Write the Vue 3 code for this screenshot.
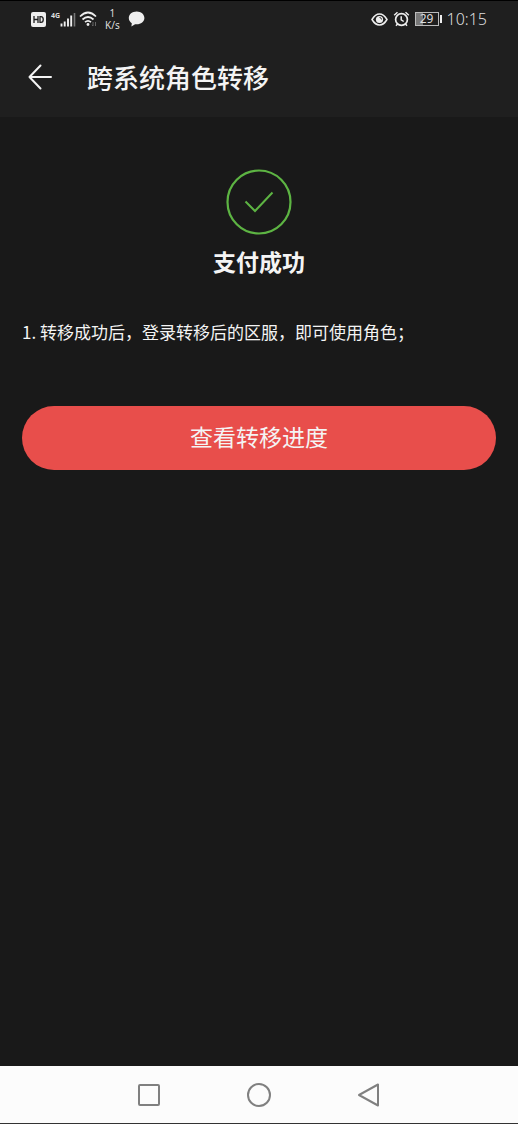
<script setup>
const title = '跨系统角色转移'
const notes = ['转移成功后，登录转移后的区服，即可使用角色；']
</script>

<template>
  <div class="screen">
    <div class="status">
      <div class="left">
        <svg class="hd" width="15" height="15" viewBox="0 0 15 15" aria-label="HD">
          <rect width="15" height="15" rx="2" fill="#eee" />
          <path d="M3 4v7M7 4v7M3 7.5h4M9 4.6v5.8h1c3 0 3-5.8 0-5.8z" fill="none" stroke="#1f1f1f" stroke-width="1.3" />
        </svg>
        <div class="cell">
          <span class="gen">4G</span>
          <svg width="16" height="15" viewBox="0 0 16 15" aria-hidden="true">
            <path d="M1.500 14.500v-3M4.700 14.500v-5M8 14.500v-8M11.200 14.500v-11" stroke="#eee" stroke-width="1.900" />
            <path d="M14.500 14.500V1" stroke="#777" stroke-width="1.600" />
          </svg>
        </div>
        <svg class="wifi" width="18" height="16" viewBox="0 0 18 16" fill="none" stroke="#eee" stroke-width="1.700" aria-hidden="true">
          <path d="M1 5.500Q9-2.500 17 5.500M3.500 8.500q5.500-5 11 0M6 11.200q3-2.600 6 0" />
          <circle cx="9" cy="13.500" r="1.400" fill="#eee" stroke="none" />
          <path d="M14 11v4m-1-1.200 1 1.200M16.500 15v-4" stroke="#666" stroke-width="1" />
        </svg>
        <div class="rate"><span>1</span><span>K/s</span></div>
        <svg class="bubble" width="17" height="16" viewBox="0 0 17 16" aria-hidden="true">
          <path d="M8.700.5C4.200.5.800 3.300.800 7c0 2.300 1.300 4.200 3 5.300L3.400 15.500l3.700-2.300c5 .8 9.300-2.200 9.300-6.200 0-3.700-3.400-6.500-7.700-6.500z" fill="#eee" />
        </svg>
      </div>
      <div class="right">
        <svg width="17" height="13" viewBox="0 0 17 13" fill="none" stroke="#eee" stroke-width="1.500" aria-hidden="true">
          <path d="M1 6.500Q4.200 1 8.500 1T16 6.500Q12.800 12 8.500 12T1 6.500z" />
          <circle cx="8.500" cy="6.500" r="3.600" fill="#eee" stroke="none" />
          <path d="M8.500 4.500q2 0 2 2" stroke="#333" stroke-width="1" />
        </svg>
        <svg width="17" height="16" viewBox="0 0 17 16" fill="none" stroke="#eee" stroke-width="1.700" aria-hidden="true">
          <circle cx="8.500" cy="8.500" r="5.900" />
          <path d="M1.200 4.300 4.500 1.200M15.800 4.300l-3.300-3.100M4.700 12.800l-1.700 2M12.300 12.800l1.700 2M8.200 5.300v3.500l2.500 1.700" stroke-width="1.500" />
        </svg>
        <div class="battery"><span>29</span></div>
        <time>10:15</time>
      </div>
    </div>

    <header class="bar">
      <button class="back" type="button" aria-label="返回">
        <svg width="24" height="26" viewBox="0 0 24 26" fill="none" stroke="#f4f4f4" stroke-width="2" stroke-linecap="round" stroke-linejoin="round">
          <path d="M12.500 1.500 1.500 13l11 11.500M1.500 13h21.500" />
        </svg>
      </button>
      <h1>{{ title }}</h1>
    </header>

    <main>
      <svg class="done" width="66" height="66" viewBox="0 0 66 66" fill="none" stroke="#5db443" aria-hidden="true">
        <circle cx="33" cy="33" r="31.500" stroke-width="2.200" />
        <path d="M19.500 32.500l9.500 9.500L46.500 23.500" stroke-width="2" />
      </svg>
      <h2>支付成功</h2>
      <p v-for="(note, i) in notes" :key="i">{{ i + 1 }}. {{ note }}</p>
      <button class="primary" type="button">查看转移进度</button>
    </main>

    <nav>
      <button type="button" aria-label="最近任务">
        <svg width="26" height="26" viewBox="0 0 26 26"><rect x="3" y="3" width="20" height="20" rx="1" /></svg>
      </button>
      <button type="button" aria-label="主屏幕">
        <svg width="26" height="26" viewBox="0 0 26 26"><circle cx="13" cy="13" r="11" /></svg>
      </button>
      <button type="button" aria-label="返回上一级">
        <svg width="26" height="26" viewBox="0 0 26 26"><path d="M22 2.500v21L3 13z" /></svg>
      </button>
    </nav>
  </div>
</template>

<style>
body {
  margin: 0;
  background: #191919;
}
</style>

<style scoped>
.screen {
  display: flex;
  flex-direction: column;
  min-height: 100vh;
  box-sizing: border-box;
  border-top: 1px solid #000;
  border-bottom: 1px solid #333;
  background: #191919;
  color: #f4f4f4;
  font-family: "Noto Sans CJK SC", sans-serif;
}
button {
  padding: 0;
  border: 0;
  background: none;
  color: inherit;
  font: inherit;
  cursor: pointer;
}
svg {
  display: block;
  flex: none;
}
.status {
  display: flex;
  justify-content: space-between;
  height: 36px;
  padding: 0 31px;
  background: #1f1f1f;
  font-family: "Noto Sans", sans-serif;
  color: #ddd;
}
.left,
.right {
  display: flex;
  align-items: center;
}
.right {
  gap: 5px;
}
.cell {
  display: flex;
  align-items: center;
  margin: 0 3px 0 5px;
}
.gen {
  align-self: flex-start;
  font-size: 7px;
  line-height: 8px;
  font-weight: 700;
}
.rate {
  display: flex;
  flex-direction: column;
  align-items: center;
  margin: 0 8px;
  font-size: 10px;
  line-height: 12px;
}
.battery {
  position: relative;
  box-sizing: border-box;
  width: 24px;
  height: 14px;
  margin-right: 3px;
  border: 1px solid #bbb;
  background: linear-gradient(90deg, #777 32%, transparent 32%);
  font-size: 12px;
  line-height: 12px;
  text-align: center;
}
.battery::after {
  content: "";
  position: absolute;
  right: -4px;
  top: 2px;
  width: 2px;
  height: 8px;
  background: #eee;
}
time {
  font-size: 16px;
  font-weight: 300;
  line-height: 20px;
}
.bar {
  display: flex;
  align-items: center;
  gap: 35px;
  height: 80px;
  padding: 0 28px;
  background: #1f1f1f;
}
h1 {
  margin: 0;
  font-size: 26px;
  line-height: 36px;
  font-weight: 500;
}
main {
  flex: 1;
  display: flex;
  flex-direction: column;
  padding: 52px 22px;
}
.done {
  align-self: center;
}
h2 {
  margin: 9px 0 0;
  font-size: 23px;
  line-height: 34px;
  font-weight: 700;
  text-align: center;
}
p {
  margin: 41px 0 0;
  font-size: 17px;
  line-height: 26px;
}
.primary {
  height: 64px;
  margin-top: 61px;
  padding-bottom: 4px;
  border-radius: 32px;
  background: #e84e4b;
  font-size: 23px;
  line-height: 34px;
}
nav {
  display: flex;
  justify-content: center;
  align-items: center;
  gap: 84px;
  height: 57px;
  background: #fcfcfc;
}
nav svg {
  fill: none;
  stroke: #808080;
  stroke-width: 2;
  stroke-linejoin: round;
}
</style>
